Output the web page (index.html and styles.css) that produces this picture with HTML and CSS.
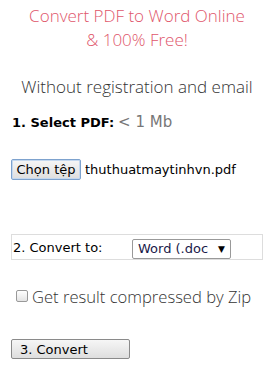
FILE: index.html
```html
<!DOCTYPE html>
<html>
<head>
<meta charset="utf-8">
<link rel="stylesheet" href="styles.css">
</head>
<body>
<div class="page">
  <h1 class="title">Convert PDF to Word Online<br>&amp; 100% Free!</h1>
  <p class="subtitle">Without registration and email</p>
  <div class="step1"><b>1. Select PDF:</b> <span class="hint">&lt; 1 Mb</span></div>
  <div class="file-row"><button class="btn file-btn">Chọn tệp</button><span class="file-name">thuthuatmaytinhvn.pdf</span></div>
  <div class="convert-box">
    <span class="convert-label">2. Convert to:</span>
    <span class="select">Word (.doc<span class="arrow">▼</span></span>
  </div>
  <label class="zip"><span class="check"></span>Get result compressed by Zip</label>
  <button class="btn convert-btn">3. Convert</button>
</div>
</body>
</html>
```
FILE: styles.css
```css
html, body { margin: 0; padding: 0; background: #fff; }
.page { padding: 0 11px; font-family: "DejaVu Sans", Verdana, sans-serif; color: #000; }
.title {
  margin: 4px 0 0; text-align: center; font-family: "Open Sans", sans-serif; font-weight: 300;
  font-size: 17px; line-height: 24px; color: #e0566b;
}
.subtitle {
  margin: 23px 0 0; text-align: center; font-family: "Open Sans", sans-serif; font-weight: 300;
  font-size: 17px; line-height: 24px; color: #333;
}
.step1 { margin-top: 14px; display: flex; align-items: baseline; gap: 4px; height: 20px; padding-left: 1px; }
.step1 b { font-size: 13px; font-weight: bold; }
.hint { font-size: 15px; color: #777; }
.file-row { margin-top: 26px; display: flex; align-items: center; gap: 4px; height: 21px; }
.btn {
  font-family: "DejaVu Sans", Verdana, sans-serif; font-size: 13px; color: #000;
  background: linear-gradient(#f6f6f6, #dedede); border: 1px solid #8a8a8a; border-radius: 2px;
  padding: 0; margin: 0; height: 21px;
}
.file-btn { width: 70px; border-color: #7da2ce; box-shadow: inset 0 0 0 1px #c4d8ef; }
.file-name { font-size: 13px; }
.convert-box {
  margin-top: 54px; border: 1px solid #ddd; height: 24px; display: flex; align-items: center;
}
.convert-label { font-size: 13px; width: 119px; padding-left: 1px; }
.select {
  width: 99px; height: 20px; border: 1px solid #999; border-radius: 2px; font-size: 13px;
  display: flex; align-items: center; justify-content: space-between; padding: 0 5px; box-sizing: border-box;
  margin-top: 3px; color: #1a1a4a;
}
.arrow { font-size: 9px; color: #000; }
.zip {
  margin-top: 24px; display: flex; align-items: center; gap: 4px; padding-left: 5px;
  font-family: "Open Sans", sans-serif; font-weight: 300; font-size: 16.6px; color: #333; height: 24px;
}
.check { width: 10px; height: 10px; border: 1px solid #999; border-radius: 2px; background: linear-gradient(#fff, #e4e4e4); }
.convert-btn { display: block; margin-top: 31px; width: 119px; height: 20px; text-align: left; padding-left: 8px; }
```
